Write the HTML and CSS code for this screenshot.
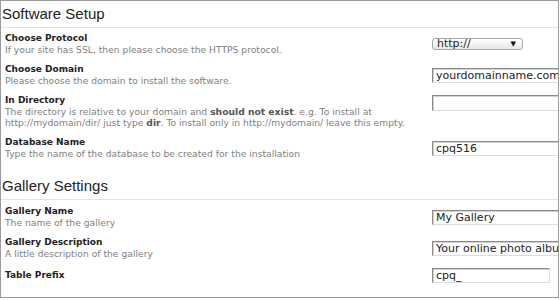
FILE: index.html
```html
<!DOCTYPE html>
<html>
<head>
<meta charset="utf-8">
<link rel="stylesheet" href="styles.css">
</head>
<body>
<div class="panel">
  <h2 class="section-title">Software Setup</h2>
  <div class="rows">
    <div class="row">
      <div class="info">
        <div class="label">Choose Protocol</div>
        <div class="desc">If your site has SSL, then please choose the HTTPS protocol.</div>
      </div>
      <div class="field">
        <div class="select"><span>http://</span><span class="arrow">▼</span></div>
      </div>
    </div>
    <div class="row">
      <div class="info">
        <div class="label">Choose Domain</div>
        <div class="desc">Please choose the domain to install the software.</div>
      </div>
      <div class="field"><input class="text" type="text" value="yourdomainname.com"></div>
    </div>
    <div class="row row-top">
      <div class="info">
        <div class="label">In Directory</div>
        <div class="desc">The directory is relative to your domain and <b>should not exist</b>. e.g. To install at http://mydomain/dir/ just type <b>dir</b>. To install only in http://mydomain/ leave this empty.</div>
      </div>
      <div class="field"><input class="text tall" type="text" value=""></div>
    </div>
    <div class="row">
      <div class="info">
        <div class="label">Database Name</div>
        <div class="desc">Type the name of the database to be created for the installation</div>
      </div>
      <div class="field"><input class="text" type="text" value="cpq516"></div>
    </div>
  </div>

  <h2 class="section-title second">Gallery Settings</h2>
  <div class="rows rows-second">
    <div class="row">
      <div class="info">
        <div class="label">Gallery Name</div>
        <div class="desc">The name of the gallery</div>
      </div>
      <div class="field"><input class="text" type="text" value="My Gallery"></div>
    </div>
    <div class="row">
      <div class="info">
        <div class="label">Gallery Description</div>
        <div class="desc">A little description of the gallery</div>
      </div>
      <div class="field"><input class="text" type="text" value="Your online photo album"></div>
    </div>
    <div class="row">
      <div class="info">
        <div class="label">Table Prefix</div>
      </div>
      <div class="field"><input class="text short" type="text" value="cpq_"></div>
    </div>
  </div>
</div>
</body>
</html>
```

FILE: styles.css
```css
body {
  margin: 0;
  background: #fff;
}

.panel {
  box-sizing: border-box;
  width: 559px;
  height: 298px;
  border: 1px solid #9a9a9a;
  overflow: hidden;
  font-family: "DejaVu Sans", Verdana, sans-serif;
  background: #fff;
}

.section-title {
  margin: 0;
  padding: 4px 0 4px 1px;
  font: normal 15px/18px "Liberation Sans", Arial, sans-serif;
  color: #222;
  border-bottom: 1px solid #d8e7ef;
}

.section-title.second {
  margin-top: 14px;
}

.rows {
  display: flex;
  flex-direction: column;
  gap: 9px;
  padding: 5px 0 0 4px;
}

.rows-second {
  padding-top: 6px;
}

.row {
  display: grid;
  grid-template-columns: 427px 160px;
  align-items: center;
}

.row-top {
  align-items: start;
}

.label {
  font-size: 9px;
  line-height: 11px;
  font-weight: bold;
  color: #222;
}

.desc {
  font-size: 9.2px;
  line-height: 11px;
  color: #808080;
  width: 410px;
}

.desc b {
  color: #555;
}

.text {
  display: block;
  box-sizing: border-box;
  width: 160px;
  height: 15px;
  margin: 0;
  padding: 0 3px;
  border: 1px solid;
  border-color: #8a8a8a #dcdcdc #dcdcdc #8a8a8a;
  box-shadow: inset 1px 1px 0 #d2d2d2;
  font: 11px/13px "DejaVu Sans", Verdana, sans-serif;
  color: #222;
  background: #fff;
  outline: none;
}

.text.tall {
  height: 16px;
}

.text.short {
  width: 118px;
}

.select {
  box-sizing: border-box;
  width: 91px;
  height: 12px;
  display: flex;
  align-items: center;
  justify-content: space-between;
  padding: 0 6px 0 4px;
  border: 1px solid #a8a8a8;
  border-radius: 3px;
  background: linear-gradient(#ffffff, #e6e6e6);
  font: 11px/10px "DejaVu Sans", Verdana, sans-serif;
  color: #222;
}

.arrow {
  font-size: 7px;
  line-height: 7px;
  color: #111;
}
```
